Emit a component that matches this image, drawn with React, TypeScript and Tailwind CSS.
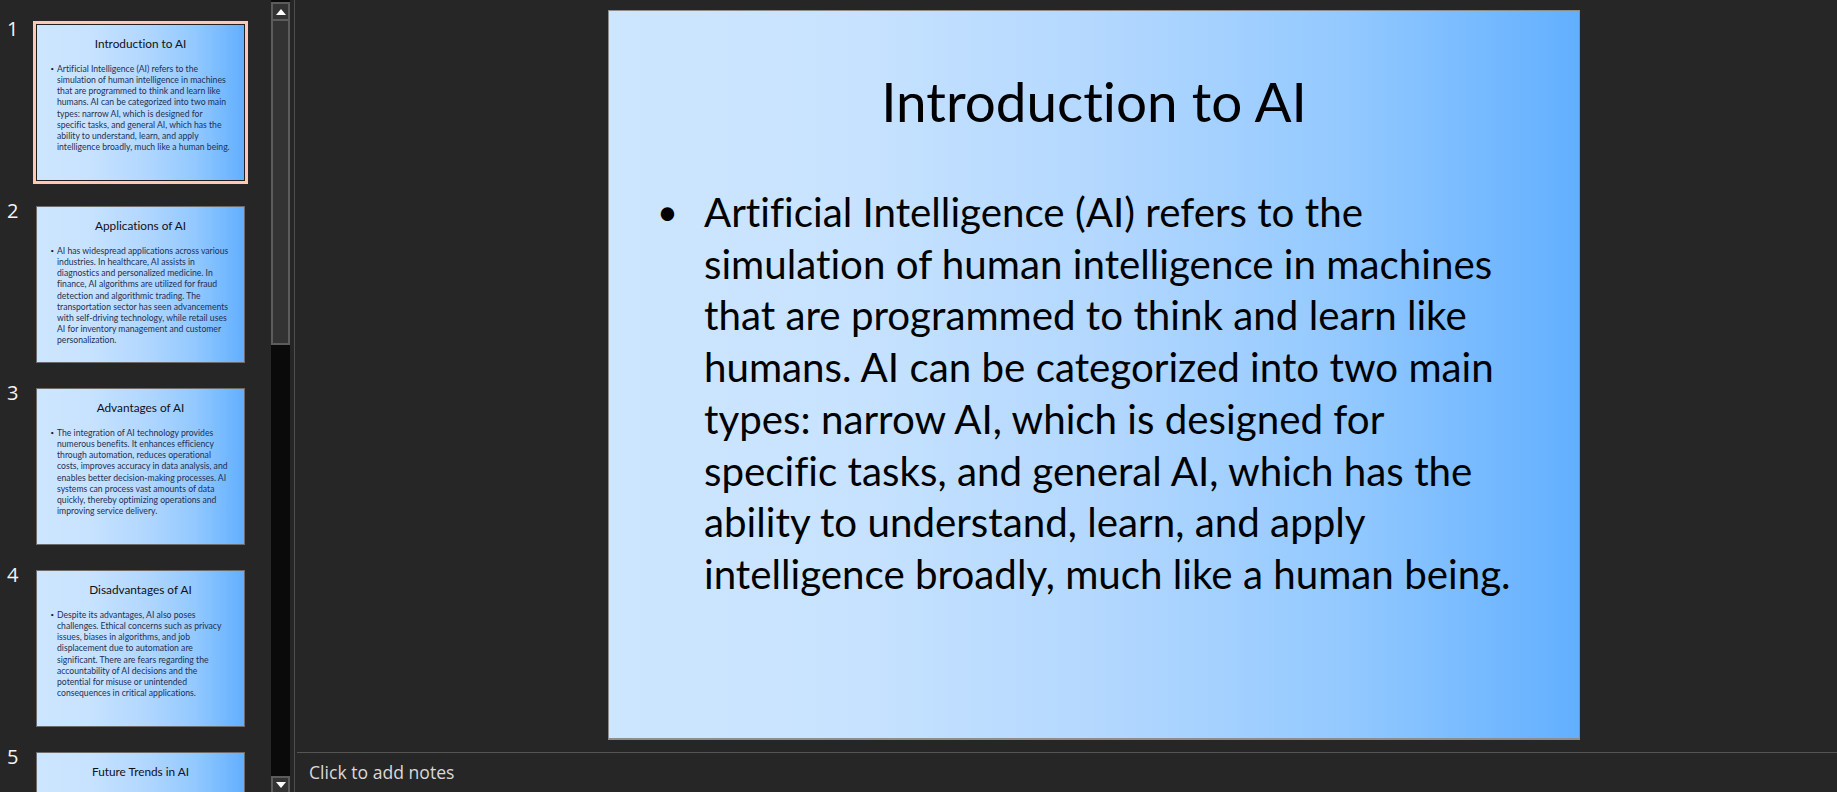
const slides = [
  {
    title: "Introduction to AI",
    lines: [
      "Artificial Intelligence (AI) refers to the",
      "simulation of human intelligence in machines",
      "that are programmed to think and learn like",
      "humans. AI can be categorized into two main",
      "types: narrow AI, which is designed for",
      "specific tasks, and general AI, which has the",
      "ability to understand, learn, and apply",
      "intelligence broadly, much like a human being.",
    ],
  },
  {
    title: "Applications of AI",
    lines: [
      "AI has widespread applications across various",
      "industries. In healthcare, AI assists in",
      "diagnostics and personalized medicine. In",
      "finance, AI algorithms are utilized for fraud",
      "detection and algorithmic trading. The",
      "transportation sector has seen advancements",
      "with self-driving technology, while retail uses",
      "AI for inventory management and customer",
      "personalization.",
    ],
  },
  {
    title: "Advantages of AI",
    lines: [
      "The integration of AI technology provides",
      "numerous benefits. It enhances efficiency",
      "through automation, reduces operational",
      "costs, improves accuracy in data analysis, and",
      "enables better decision-making processes. AI",
      "systems can process vast amounts of data",
      "quickly, thereby optimizing operations and",
      "improving service delivery.",
    ],
  },
  {
    title: "Disadvantages of AI",
    lines: [
      "Despite its advantages, AI also poses",
      "challenges. Ethical concerns such as privacy",
      "issues, biases in algorithms, and job",
      "displacement due to automation are",
      "significant. There are fears regarding the",
      "accountability of AI decisions and the",
      "potential for misuse or unintended",
      "consequences in critical applications.",
    ],
  },
  { title: "Future Trends in AI", lines: [] },
];

const gradient =
  "bg-[linear-gradient(90deg,#cde6ff_0%,#c8e3ff_24%,#b2d7ff_52%,#93c9ff_76%,#62afff_100%)]";

function Thumb({ n, title, lines, selected }: { n: number; title: string; lines: string[]; selected?: boolean }) {
  return (
    <div className="flex shrink-0">
      <div className="-mt-[2px] h-[20px] w-[33px] pl-[7px] text-[20px] leading-[20px] text-[#f4f4f4] font-['Open_Sans',sans-serif]">{n}</div>
      <div className={`border-[3px] ${selected ? "border-[#ffc9b5]" : "border-transparent"}`}>
        <div
          className={`h-[157px] w-[209px] border flex flex-col overflow-hidden ${selected ? "border-[#222222]" : "border-[#6b6b6b]"} ${gradient}`}
        >
          <div className="mt-[11px] text-center text-[11.8px] leading-[16px] text-[#101018] [font-variant-ligatures:none]">{title}</div>
          {lines.length > 0 && (
            <div className="mt-[11px] flex">
              <div className="w-[18px] pr-[1px] text-right text-[6px] leading-[11.15px] text-[#1a2030]">•</div>
              <div className="ml-[2px] whitespace-nowrap text-[8.65px] leading-[11.15px] text-[#1f2f52] [font-variant-ligatures:none]">
                {lines.map((l) => (
                  <div key={l}>{l}</div>
                ))}
              </div>
            </div>
          )}
        </div>
      </div>
    </div>
  );
}

function Arrow({ down }: { down?: boolean }) {
  return (
    <svg width="10" height="6" viewBox="0 0 10 6" className="block">
      <polygon points={down ? "0,0 10,0 5,6" : "0,6 10,6 5,0"} fill="#ffffff" />
    </svg>
  );
}

export default function App() {
  const main = slides[0];
  return (
    <div className="flex h-[792px] w-[1837px] overflow-hidden bg-[#262626] font-['Lato',sans-serif] text-black">
      <div className="flex h-[792px] w-[271px] shrink-0 flex-col gap-[19px] overflow-hidden pt-[21px]">
        {slides.map((s, i) => (
          <Thumb key={s.title} n={i + 1} title={s.title} lines={s.lines} selected={i === 0} />
        ))}
      </div>

      <div className="flex h-[792px] w-[19px] shrink-0 flex-col bg-[#0a0a0a] pt-[2px]">
        <div className="flex h-[19px] shrink-0 items-center justify-center border-2 border-[#5c5c5c] bg-[#333333]">
          <Arrow />
        </div>
        <div className="h-[324px] shrink-0 border-2 border-t-0 border-[#5c5c5c] bg-[#333333]" />
        <div className="flex-1" />
        <div className="flex h-[16px] shrink-0 items-center justify-center border-2 border-b-0 border-[#5c5c5c] bg-[#333333]">
          <Arrow down />
        </div>
      </div>

      <div className="ml-[4px] w-px shrink-0 bg-[#4d4d4d]" />

      <div className="ml-[2px] flex flex-1 flex-col">
        <div className="h-[752px] shrink-0 pl-[311px] pt-[10px]">
          <div className={`h-[730px] w-[972px] border border-b-2 border-[#8d8d8d] ${gradient}`}>
            <div className="mt-[54px] text-center text-[54.8px] leading-[72px] [font-variant-ligatures:none]">{main.title}</div>
            <div className="mt-[49px] flex">
              <div className="w-[69px] text-right text-[36px] leading-[51.7px]">•</div>
              <div className="ml-[26px] whitespace-nowrap text-[40.3px] leading-[51.7px] [font-variant-ligatures:none]">
                {main.lines.map((l) => (
                  <div key={l}>{l}</div>
                ))}
              </div>
            </div>
          </div>
        </div>
        <div className="h-px shrink-0 bg-[#555555]" />
        <div className="pl-[12px] pt-[6px] font-['Open_Sans',sans-serif] text-[17.6px] leading-[26px] text-[#d9d9d9]">
          Click to add notes
        </div>
      </div>
    </div>
  );
}
